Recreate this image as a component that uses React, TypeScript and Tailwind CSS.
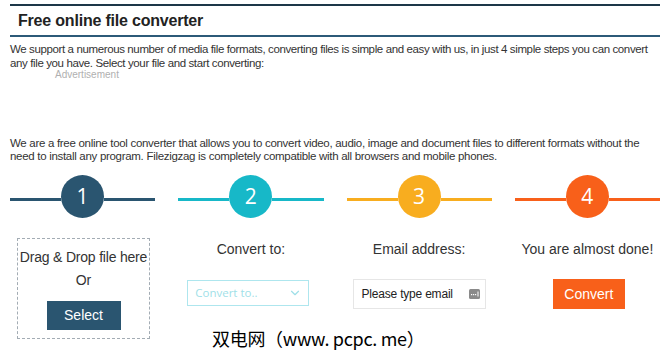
import { ChevronDown } from "lucide-react";

const steps = [
  { n: 1, line: "bg-[#2a5570]", circle: "bg-[#2a5570]" },
  { n: 2, line: "bg-[#17b8c8]", circle: "bg-[#17b8c8]" },
  { n: 3, line: "bg-[#f8ad1f]", circle: "bg-[#f8ad1f]" },
  { n: 4, line: "bg-[#f8601a]", circle: "bg-[#f8601a]" },
];

function StepHead({ n, line, circle }: { n: number; line: string; circle: string }) {
  return (
    <div className="flex h-[43px] items-center">
      <div className={`mt-[5px] h-[3px] flex-1 ${line}`} />
      <div
        className={`flex h-[43px] w-[43px] items-center justify-center rounded-full text-[21px] text-white ${circle}`}
        style={{ fontFamily: '"Open Sans", sans-serif' }}
      >
        {n}
      </div>
      <div className={`mt-[5px] h-[3px] flex-1 ${line}`} />
    </div>
  );
}

function KeyIcon() {
  return (
    <svg width="11" height="10" viewBox="0 0 11 10">
      <rect x="0" y="0" width="11" height="10" rx="1.5" fill="#8a8a8a" />
      <rect x="2" y="5" width="1.2" height="1.2" fill="#fff" />
      <rect x="4" y="5" width="1.2" height="1.2" fill="#fff" />
      <rect x="6" y="5" width="1.2" height="1.2" fill="#fff" />
      <rect x="8.5" y="2.5" width="1" height="5" fill="#fff" />
    </svg>
  );
}

export default function App() {
  return (
    <div
      className="relative h-[361px] w-[670px] overflow-hidden bg-white text-[#333]"
      style={{ fontFamily: '"Liberation Sans", Arial, sans-serif' }}
    >
      <div className="mx-[10px]">
        {/* Header */}
        <div className="mt-[4px] flex h-[33px] items-center border-y-2 border-t-[#1d3748] border-b-[#2c5a78] pl-[8px]">
          <h1 className="text-[16px] font-bold leading-none tracking-[-0.2px] text-[#222]">Free online file converter</h1>
        </div>

        <p className="mt-[5px] text-[11.5px] leading-[14px] tracking-[-0.38px]">
          We support a numerous number of media file formats, converting files is simple and easy with us, in just 4 simple steps you can convert any file you have. Select your file and start converting:
        </p>
        <div className="pl-[45px] text-[10px] leading-[10px] text-[#b0b0b0]">Advertisement</div>

        <p className="mt-[57px] text-[11.5px] leading-[13px] tracking-[-0.3px]">
          We are a free online tool converter that allows you to convert video, audio, image and document files to different formats without the need to install any program. Filezigzag is completely compatible with all browsers and mobile phones.
        </p>

        {/* Steps */}
        <div className="mt-[12px] grid grid-cols-4 gap-x-[23px]">
          {steps.map((s) => (
            <StepHead key={s.n} {...s} />
          ))}

          {/* 1 */}
          <div className="ml-[7px] mt-[20px] flex h-[101px] w-[133px] flex-col items-center border border-dashed border-[#a3acb4] pt-[9px]">
            <div className="text-[14px] leading-[18px] tracking-[-0.2px] whitespace-nowrap">Drag &amp; Drop file here</div>
            <div className="mt-[5px] text-[14px] leading-[18px]">Or</div>
            <button className="mt-[12px] h-[29px] w-[74px] bg-[#2a5570] text-[14px] text-white">Select</button>
          </div>

          {/* 2 */}
          <div className="mt-[22px] flex flex-col">
            <div className="text-center text-[14px] leading-[18px]">Convert to:</div>
            <div className="ml-[9px] mt-[22px] flex h-[26px] w-[122px] items-center justify-between border border-[#aee6ee] pl-[7px] pr-[6px]">
              <span className="text-[11.5px] text-[#9fdfe8]" style={{ fontFamily: '"Open Sans", sans-serif' }}>
                Convert to..
              </span>
              <ChevronDown size={14} strokeWidth={2} className="text-[#9fdfe8]" />
            </div>
          </div>

          {/* 3 */}
          <div className="mt-[22px] flex flex-col">
            <div className="text-center text-[14px] leading-[18px]">Email address:</div>
            <div className="ml-[6px] mt-[21px] flex h-[30px] w-[133px] items-center justify-between border border-[#e6e6e6] pl-[8px] pr-[5px]">
              <span className="text-[12px] tracking-[-0.2px] text-[#222]">Please type email</span>
              <KeyIcon />
            </div>
          </div>

          {/* 4 */}
          <div className="mt-[22px] flex flex-col items-center">
            <div className="text-center text-[14px] leading-[18px]">You are almost done!</div>
            <button className="ml-[3px] mt-[21px] h-[30px] w-[72px] bg-[#f8601a] text-[14px] text-white">Convert</button>
          </div>
        </div>
      </div>

      {/* watermark */}
      <div
        className="absolute left-[212px] top-[327px] text-[18px] leading-[22px] tracking-[-0.3px] text-black [text-shadow:0_0_2px_#fff,0_0_2px_#fff]"
        style={{ fontFamily: '"Noto Sans CJK SC", sans-serif' }}
      >
        双电网（www. pcpc. me）
      </div>
    </div>
  );
}
